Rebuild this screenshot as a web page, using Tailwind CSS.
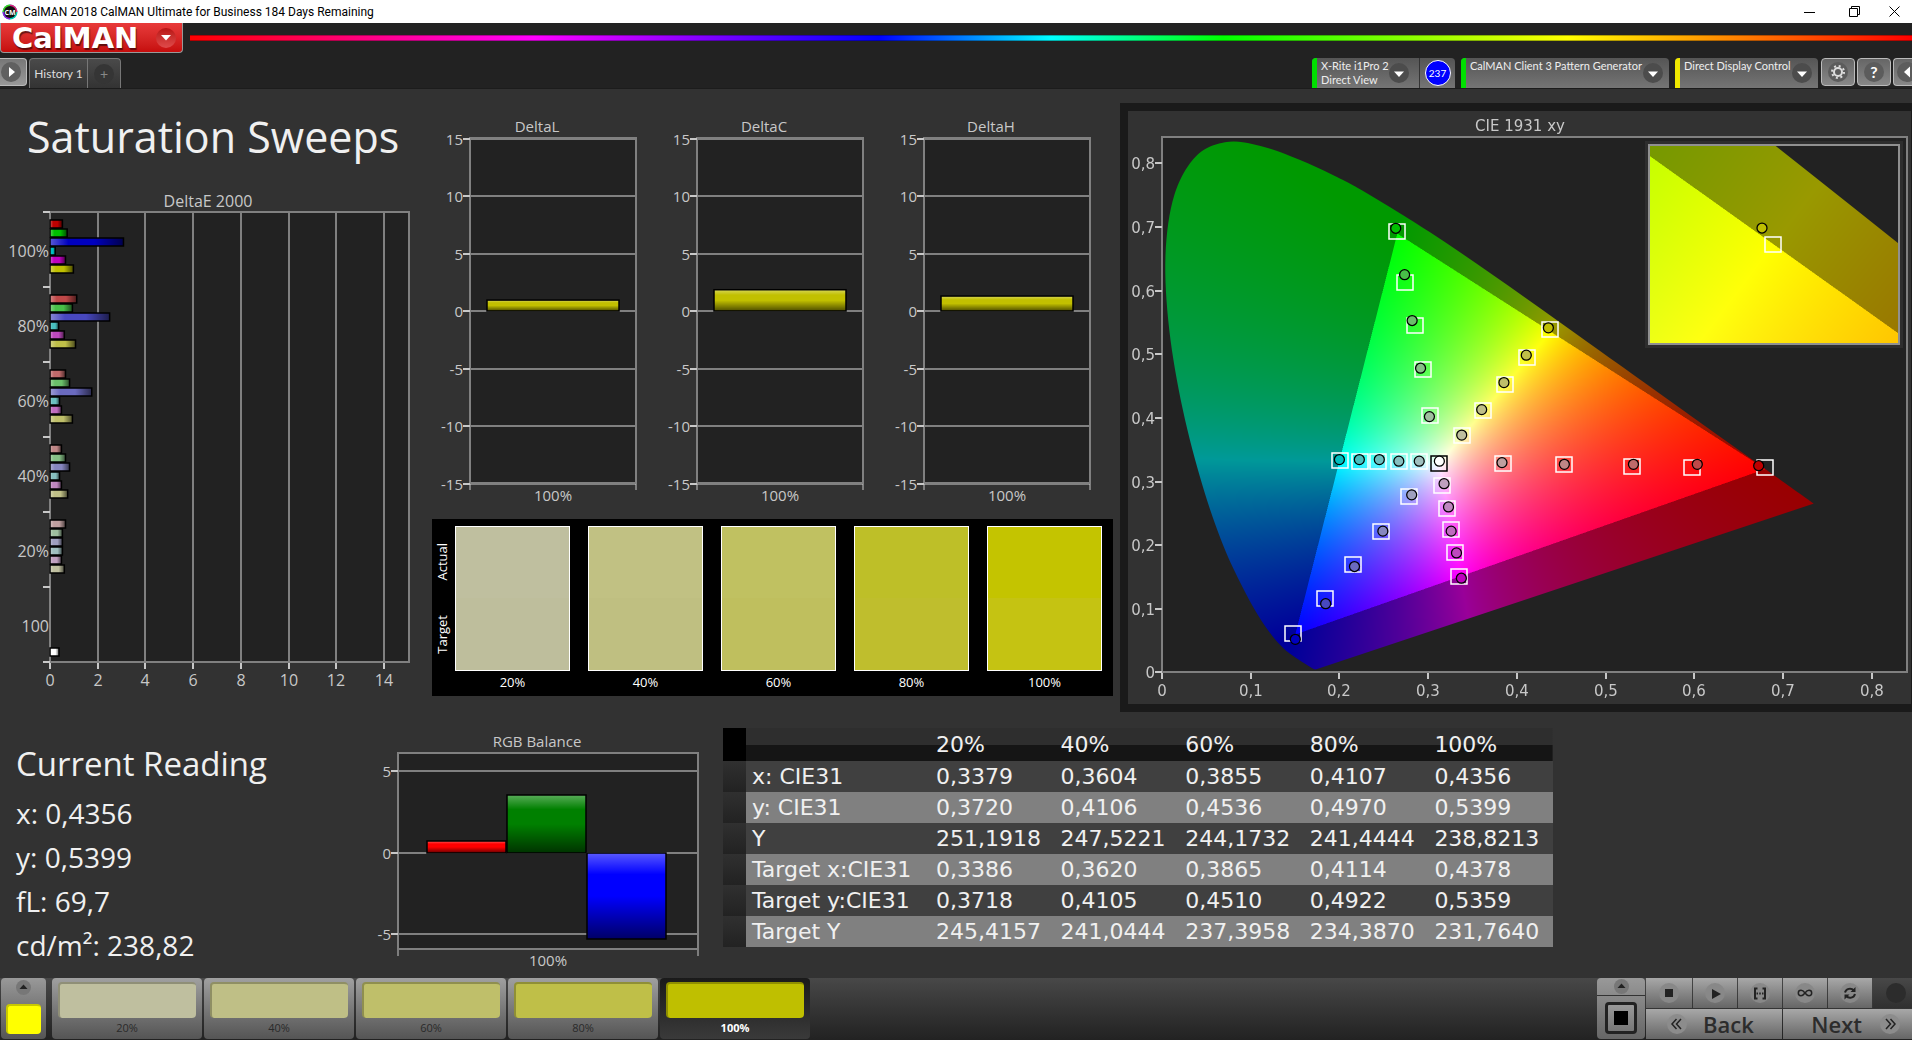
<!DOCTYPE html>
<html lang="en">
<head>
  <meta charset="UTF-8">
  <meta name="viewport" content="width=device-width, initial-scale=1.0">
  <title>CalMAN 2018 CalMAN Ultimate for Business 184 Days Remaining</title>
  <script src="https://cdn.jsdelivr.net/npm/@tailwindcss/browser@4"></script>
</head>
<body class="bg-[#323232] text-[#f0f0f0] font-['Open_Sans',sans-serif] flex flex-col min-h-screen overflow-x-hidden">

  <!-- Window title bar -->
  <div class="flex items-center h-[23px] bg-white text-black pl-[2px]">
    <svg class="w-4 h-4" viewBox="0 0 16 16">
      <circle cx="8" cy="8" r="7.5" fill="#00c8b0"/>
      <path d="M8 .5A7.5 7.5 0 0 0 .5 8H8z" fill="#40d020"/>
      <path d="M.5 8A7.5 7.5 0 0 0 8 15.500V8z" fill="#9020e0"/>
      <path d="M8 .5A7.5 7.5 0 0 1 15.500 8H8z" fill="#e02080"/>
      <circle cx="8" cy="8" r="6" fill="#111"/>
      <text x="8" y="10.500" text-anchor="middle" font-size="7" font-weight="bold" fill="#fff">CM</text>
    </svg>
    <span class="ml-[5px] text-[12px] font-[Roboto,sans-serif]">CalMAN 2018 CalMAN Ultimate for Business 184 Days Remaining</span>
    <div class="ml-auto flex items-center">
      <button aria-label="Minimize" class="w-[45px] h-[23px] flex items-center justify-center"><svg class="w-[11px] h-[11px]" viewBox="0 0 11 11" fill="none" stroke="#000"><path d="M0 6.500H11"/></svg></button>
      <button aria-label="Restore" class="w-[45px] h-[23px] flex items-center justify-center"><svg class="w-[11px] h-[11px]" viewBox="0 0 11 11" fill="none" stroke="#000"><path d="M.5 2.500h8v8h-8zM2.500 2.500v-2h8v8h-2"/></svg></button>
      <button aria-label="Close" class="w-[35px] h-[23px] flex items-center justify-center"><svg class="w-[11px] h-[11px]" viewBox="0 0 11 11" fill="none" stroke="#000"><path d="M.5 .5l10 10M10.500 .5l-10 10"/></svg></button>
    </div>
  </div>

  <!-- Logo and spectrum line -->
  <header class="bg-[#222] h-[66px] flex flex-col justify-between border-b border-[#1c1c1c]">
    <div class="flex items-start">
      <button class="w-[183px] h-[30px] flex items-center pl-[11px] pr-[6px] rounded-b bg-linear-to-b from-[#e83a3a] to-[#c60c0c] border border-t-0 border-[#999]" aria-label="CalMAN menu">
        <span class="font-['DejaVu_Sans',sans-serif] font-bold text-[29px] leading-[28px] text-white text-shadow-[1px_2px_1px_#0008]">CalMAN</span>
        <span class="ml-auto w-5 h-5 rounded-full bg-linear-to-b from-[#b81212] to-[#e04a4a] flex items-center justify-center">
          <svg class="w-[10px] h-[6px]" viewBox="0 0 10 6"><path d="M0 0H10L5 5.500z" fill="#fff"/></svg>
        </span>
      </button>
      <div class="flex-1 ml-[7px] mt-3 h-[6px] border-y border-black/30 bg-[linear-gradient(90deg,#f00_0%,#f0f_20%,#00f_40%,#0ff_50%,#0f0_60%,#ff0_80%,#f00_100%)]"></div>
    </div>

    <!-- Tabs and devices -->
    <div class="flex items-start h-[30px] text-[12px] leading-[17px] font-['Lato',sans-serif]">
      <button aria-label="Expand" class="w-[27px] h-[28px] rounded-r border border-l-0 border-[#bbb] bg-linear-to-b from-[#777] to-[#999] flex items-center justify-center pr-1">
        <svg class="w-5 h-5" viewBox="0 0 20 20"><circle cx="10" cy="10" r="10" fill="#606060"/><path d="M8 5l6 5-6 5z" fill="#fff"/></svg>
      </button>
      <button class="ml-[2px] h-[30px] w-[59px] rounded-tl border border-b-0 border-[#777] bg-linear-to-b from-[#4a4a4a] to-[#333] text-[#ddd]">History 1</button>
      <button aria-label="Add tab" class="h-[30px] w-[33px] rounded-tr border border-l-0 border-b-0 border-[#777] bg-linear-to-b from-[#4a4a4a] to-[#333] flex items-center justify-center">
        <span class="w-5 h-5 rounded-full bg-[#353535] text-[#888] text-[14px] leading-[20px]">+</span>
      </button>

      <div class="ml-auto flex items-start">
        <button class="w-[107px] h-[30px] flex bg-linear-to-b from-[#555] to-[#757575] rounded-tl overflow-hidden text-left text-[#eee] text-[11px] leading-[14px]">
          <span class="shrink-0 w-[5px] h-full bg-[#00e000]"></span>
          <span class="pl-1 pt-px whitespace-nowrap">X-Rite i1Pro 2<br>Direct View</span>
          <svg class="shrink-0 ml-auto mt-[5px] mr-[10px] w-5 h-5" viewBox="0 0 20 20"><circle cx="10" cy="10" r="10" fill="#4c4c4c"/><path d="M5 8.500H15L10 14z" fill="#fff"/></svg>
        </button>
        <div class="w-[36px] h-[30px] bg-linear-to-b from-[#555] to-[#757575] rounded-tr border-l border-[#333] flex items-center justify-center">
          <span class="w-[26px] h-[26px] rounded-full bg-[#00f] border border-white text-white text-[10px] leading-[24px] text-center">237</span>
        </div>
        <button class="ml-[6px] w-[208px] h-[30px] flex bg-linear-to-b from-[#555] to-[#757575] rounded-t overflow-hidden text-left text-[#eee] text-[11px] leading-[14px]">
          <span class="shrink-0 w-[5px] h-full bg-[#00e000]"></span>
          <span class="pl-1 pt-px whitespace-nowrap">CalMAN Client 3 Pattern Generator</span>
          <svg class="shrink-0 ml-auto mt-[5px] mr-[6px] w-5 h-5" viewBox="0 0 20 20"><circle cx="10" cy="10" r="10" fill="#4c4c4c"/><path d="M5 8.500H15L10 14z" fill="#fff"/></svg>
        </button>
        <button class="ml-[6px] w-[143px] h-[30px] flex bg-linear-to-b from-[#555] to-[#757575] rounded-t overflow-hidden text-left text-[#eee] text-[11px] leading-[14px]">
          <span class="shrink-0 w-[5px] h-full bg-[#f0e800]"></span>
          <span class="pl-1 pt-px whitespace-nowrap">Direct Display Control</span>
          <svg class="shrink-0 ml-auto mt-[5px] mr-[6px] w-5 h-5" viewBox="0 0 20 20"><circle cx="10" cy="10" r="10" fill="#4c4c4c"/><path d="M5 8.500H15L10 14z" fill="#fff"/></svg>
        </button>
        <button aria-label="Settings" class="ml-[3px] w-[34px] h-[28px] rounded border border-[#bbb] bg-linear-to-b from-[#666] to-[#888] flex items-center justify-center">
          <svg class="w-5 h-5" viewBox="0 0 20 20"><circle cx="10" cy="10" r="10" fill="#5c5c5c"/><circle cx="10" cy="10" r="4" fill="none" stroke="#ddd" stroke-width="2"/><circle cx="10" cy="10" r="6" fill="none" stroke="#ddd" stroke-width="2" stroke-dasharray="2 2.710"/></svg>
        </button>
        <button aria-label="Help" class="ml-[2px] w-[34px] h-[28px] rounded border border-[#bbb] bg-linear-to-b from-[#666] to-[#888] flex items-center justify-center">
          <span class="w-5 h-5 rounded-full bg-[#5c5c5c] text-white font-bold text-[16px] leading-[20px]">?</span>
        </button>
        <button aria-label="Collapse" class="ml-[2px] w-[19px] h-[28px] rounded-l border border-r-0 border-[#bbb] bg-linear-to-b from-[#666] to-[#888] flex items-center justify-end overflow-hidden">
          <svg class="w-[15px] h-5" viewBox="0 0 15 20"><circle cx="10" cy="10" r="10" fill="#5c5c5c"/><path d="M13 4.500l-6 5.500 6 5.500z" fill="#fff"/></svg>
        </button>
      </div>
    </div>
  </header>

  <main class="flex-1">
    <div class="grid grid-cols-[430fr_683fr_799fr] items-start">

      <section class="pt-6">
        <h1 class="pl-[27px] text-[43px] leading-[48px] whitespace-nowrap">Saturation Sweeps</h1>
        <svg id="deltaE" class="block w-full mt-6" viewBox="0 0 430 510"></svg>
      </section>

      <section class="pt-6">
        <div class="grid grid-cols-3 pr-[2px]">
          <svg id="deltaL" class="block w-full" viewBox="0 0 227 400"></svg>
          <svg id="deltaC" class="block w-full" viewBox="0 0 227 400"></svg>
          <svg id="deltaH" class="block w-full" viewBox="0 0 227 400"></svg>
        </div>
        <div class="mt-[6px] ml-[2px] bg-black h-[177px] flex pt-[7px] pr-[11px] text-[13px] leading-[22px] text-white">
          <div class="w-[23px] h-[145px] flex flex-col items-center justify-around pr-1">
            <span class="[writing-mode:vertical-rl] rotate-180">Actual</span>
            <span class="[writing-mode:vertical-rl] rotate-180">Target</span>
          </div>
          <div class="flex-1 grid grid-cols-5 gap-[18px] text-center">
            <div><div class="h-[145px] border border-white bg-[linear-gradient(#bfbf9f_50%,#bebe9c_50%)]"></div>20%</div>
            <div><div class="h-[145px] border border-white bg-[linear-gradient(#c1c183_50%,#bfbf81_50%)]"></div>40%</div>
            <div><div class="h-[145px] border border-white bg-[linear-gradient(#c0c161_50%,#bfbf5e_50%)]"></div>60%</div>
            <div><div class="h-[145px] border border-white bg-[linear-gradient(#bebf28_50%,#bfbe2d_50%)]"></div>80%</div>
            <div><div class="h-[145px] border border-white bg-[linear-gradient(#c4c400_50%,#c5c312_50%)]"></div>100%</div>
          </div>
        </div>
      </section>

      <section class="pt-[14px] pl-[7px]">
        <div class="relative border-8 border-r-[1px] border-[#1a1a1a]">
          <canvas id="gamut" class="absolute inset-0 w-full h-full" width="1566" height="1186"></canvas>
          <svg id="cie" class="relative block w-full" viewBox="0 0 783 593"></svg>
        </div>
      </section>
    </div>

    <div class="grid grid-cols-[365fr_350fr_838fr_359fr] items-start pt-4">
      <section class="pl-4 pt-[14px]">
        <h2 class="text-[33px] leading-[44px]">Current Reading</h2>
        <div class="pt-[5px] text-[28px] leading-[44px]">
          <p>x: 0,4356</p>
          <p>y: 0,5399</p>
          <p>fL: 69,7</p>
          <p>cd/m²: 238,82</p>
        </div>
      </section>

      <svg id="rgb" class="block w-full" viewBox="0 0 350 245"></svg>

      <div class="pl-2">
        <table class="w-full table-fixed text-left font-['DejaVu_Sans',sans-serif] text-[22px] leading-[31px] [&_th]:font-normal [&_td]:p-0 [&_td]:pl-[6px] [&_th]:pl-[6px] [&_th]:whitespace-nowrap">
          <colgroup><col class="w-[23px]"><col class="w-[184px]"><col><col><col><col><col></colgroup>
          <thead>
            <tr class="h-[33px] bg-[linear-gradient(#2e2e2e_50%,#151515_50%)]">
              <td class="bg-black"></td><td></td><th>20%</th><th>40%</th><th>60%</th><th>80%</th><th>100%</th>
            </tr>
          </thead>
          <tbody>
            <tr class="bg-[#404040]"><td class="bg-linear-to-b from-[#303030] to-[#222]"></td><th>x: CIE31</th><td>0,3379</td><td>0,3604</td><td>0,3855</td><td>0,4107</td><td>0,4356</td></tr>
            <tr class="bg-[#808080]"><td class="bg-linear-to-b from-[#303030] to-[#222]"></td><th>y: CIE31</th><td>0,3720</td><td>0,4106</td><td>0,4536</td><td>0,4970</td><td>0,5399</td></tr>
            <tr class="bg-[#404040]"><td class="bg-linear-to-b from-[#303030] to-[#222]"></td><th>Y</th><td>251,1918</td><td>247,5221</td><td>244,1732</td><td>241,4444</td><td>238,8213</td></tr>
            <tr class="bg-[#808080]"><td class="bg-linear-to-b from-[#303030] to-[#222]"></td><th>Target x:CIE31</th><td>0,3386</td><td>0,3620</td><td>0,3865</td><td>0,4114</td><td>0,4378</td></tr>
            <tr class="bg-[#404040]"><td class="bg-linear-to-b from-[#303030] to-[#222]"></td><th>Target y:CIE31</th><td>0,3718</td><td>0,4105</td><td>0,4510</td><td>0,4922</td><td>0,5359</td></tr>
            <tr class="bg-[#808080]"><td class="bg-linear-to-b from-[#303030] to-[#222]"></td><th>Target Y</th><td>245,4157</td><td>241,0444</td><td>237,3958</td><td>234,3870</td><td>231,7640</td></tr>
          </tbody>
        </table>
      </div>
    </div>
  </main>

  <!-- Bottom bar -->
  <footer class="h-[62px] flex bg-linear-to-b from-[#484848] to-[#222] pl-px text-[11px] leading-[20px] text-[#2a2a2a]">
    <button aria-label="Current color" class="w-[45px] h-[61px] rounded bg-linear-to-b from-[#999] to-[#555] flex flex-col items-center pt-[2px]">
      <svg class="w-[15px] h-[15px]" viewBox="0 0 15 15"><circle cx="7.500" cy="7.500" r="7.500" fill="#777"/><path d="M3.500 9L7.500 4.500 11.500 9z" fill="#222"/></svg>
      <span class="mt-[9px] w-[35px] h-[30px] rounded-sm bg-[#ff0] border-t-2 border-l-2 border-[#c8c800]"></span>
    </button>
    <div class="flex gap-[2px] ml-[6px]">
      <button class="w-[150px] h-[61px] rounded bg-linear-to-b from-[#a0a0a0] to-[#555] px-[6px] pt-[3px]"><span class="block h-[36px] rounded bg-[#bfbf9f] border-t-2 border-l-2 border-black/25"></span>20%</button>
      <button class="w-[150px] h-[61px] rounded bg-linear-to-b from-[#a0a0a0] to-[#555] px-[6px] pt-[3px]"><span class="block h-[36px] rounded bg-[#bfbf86] border-t-2 border-l-2 border-black/25"></span>40%</button>
      <button class="w-[150px] h-[61px] rounded bg-linear-to-b from-[#a0a0a0] to-[#555] px-[6px] pt-[3px]"><span class="block h-[36px] rounded bg-[#bfbf6a] border-t-2 border-l-2 border-black/25"></span>60%</button>
      <button class="w-[150px] h-[61px] rounded bg-linear-to-b from-[#a0a0a0] to-[#555] px-[6px] pt-[3px]"><span class="block h-[36px] rounded bg-[#bfbf48] border-t-2 border-l-2 border-black/25"></span>80%</button>
      <button class="w-[150px] h-[61px] rounded bg-linear-to-b from-[#1a1a1a] to-[#3a3a3a] px-[6px] pt-[3px] text-white font-bold"><span class="block h-[36px] rounded bg-[#bfbf00] border-t-2 border-l-2 border-black/25"></span>100%</button>
    </div>

    <div class="ml-auto flex gap-px">
      <button aria-label="Pattern window" class="w-[48px] h-[61px] rounded bg-linear-to-b from-[#999] to-[#666] flex flex-col items-center">
        <span class="w-full h-[18px] border-b border-[#333] flex items-center justify-center">
          <svg class="w-[15px] h-[15px]" viewBox="0 0 15 15"><circle cx="7.500" cy="7.500" r="7.500" fill="#777"/><path d="M3.500 9L7.500 4.500 11.500 9z" fill="#222"/></svg>
        </span>
        <span class="mt-[6px] w-[32px] h-[32px] rounded border-[3px] border-[#222] bg-linear-to-b from-[#999] to-[#777] flex items-center justify-center"><span class="w-[14px] h-[14px] bg-black"></span></span>
      </button>
      <div class="w-[266px] flex flex-col gap-px">
        <div class="flex gap-px h-[30px]">
          <button aria-label="Stop" class="w-[46px] bg-linear-to-b from-[#a8a8a8] to-[#666] flex items-center justify-center"><svg class="w-5 h-5" viewBox="0 0 20 20"><circle cx="10" cy="10" r="10" fill="#888"/><path d="M6 6h8v8H6z" fill="#222"/></svg></button>
          <button aria-label="Play" class="w-[44px] bg-linear-to-b from-[#a8a8a8] to-[#666] flex items-center justify-center"><svg class="w-5 h-5" viewBox="0 0 20 20"><circle cx="10" cy="10" r="10" fill="#888"/><path d="M7 6l9 5-9 5z" fill="#222"/></svg></button>
          <button aria-label="Read series" class="w-[44px] bg-linear-to-b from-[#a8a8a8] to-[#666] flex items-center justify-center"><svg class="w-5 h-5" viewBox="0 0 20 20" fill="none" stroke="#222" stroke-width="2"><circle cx="10" cy="10" r="10" fill="#888" stroke="none"/><path d="M7.500 5.500H5v10h2.500M12.500 5.500H15v10h-2.500"/><path d="M6.500 10.500h7" stroke-dasharray="1.500 1.250"/></svg></button>
          <button aria-label="Loop" class="w-[44px] bg-linear-to-b from-[#a8a8a8] to-[#666] flex items-center justify-center"><svg class="w-5 h-5" viewBox="0 0 20 20" fill="none" stroke="#222" stroke-width="1.500"><circle cx="10" cy="10" r="10" fill="#888" stroke="none"/><path d="M10 10C8.500 8 7.500 7.300 6 7.300a2.700 2.700 0 0 0 0 5.400C7.500 12.700 8.500 12 10 10c1.500-2 2.500-2.700 4-2.700a2.700 2.700 0 0 1 0 5.400c-1.500 0-2.500-.7-4-2.700z"/></svg></button>
          <button aria-label="Refresh" class="w-[44px] bg-linear-to-b from-[#a8a8a8] to-[#666] flex items-center justify-center"><svg class="w-5 h-5" viewBox="0 0 20 20" fill="none" stroke="#222" stroke-width="2"><circle cx="10" cy="10" r="10" fill="#888" stroke="none"/><path d="M5 9.500C6 5.500 11 4.500 14 7.500M15 11c-1 4-6 5-9 2"/><path d="M15.500 4v5h-5zM4.500 16.500v-5h5z" fill="#222" stroke="none"/></svg></button>
          <span class="flex-1 bg-linear-to-b from-[#484848] to-[#303030] flex items-center pl-[13px]"><span class="w-5 h-5 rounded-full bg-[#2c2c2c]"></span></span>
        </div>
        <div class="flex gap-px h-[30px] text-[22px] leading-[30px] font-semibold text-[#2c2c2c]">
          <button class="w-[136px] bg-linear-to-b from-[#a8a8a8] to-[#666] flex items-center pl-[21px] gap-4">
            <svg class="w-5 h-5" viewBox="0 0 20 20" fill="none" stroke="#222" stroke-width="1.500"><circle cx="10" cy="10" r="10" fill="#8c8c8c" stroke="none"/><path d="M9.500 5L5 10l4.500 5M14 5l-4.500 5 4.500 5"/></svg>Back
          </button>
          <button class="flex-1 bg-linear-to-b from-[#a8a8a8] to-[#666] flex items-center justify-end pr-3 gap-[18px]">
            Next<svg class="w-5 h-5" viewBox="0 0 20 20" fill="none" stroke="#222" stroke-width="1.500"><circle cx="10" cy="10" r="10" fill="#8c8c8c" stroke="none"/><path d="M6 5l4.500 5L6 15M10.500 5l4.500 5-4.500 5"/></svg>
          </button>
        </div>
      </div>
    </div>
  </footer>

  <script>
    const LABEL = 'fill-[#c8c8c8] text-[16px]';
    const SMALL = 'fill-[#c8c8c8] text-[15px]';
    const WIDE = "fill-[#c8c8c8] text-[15px] font-['DejaVu_Sans',sans-serif]";

    const rect = (x, y, w, h, attrs) => `<rect x="${x}" y="${y}" width="${w}" height="${h}" ${attrs}/>`;
    const line = (x1, y1, x2, y2, color, width = 2) => `<path d="M${x1} ${y1}L${x2} ${y2}" stroke="${color}" stroke-width="${width}"/>`;
    const text = (x, y, anchor, cls, str) => `<text x="${x}" y="${y}" text-anchor="${anchor}" class="${cls}">${str}</text>`;

    // Glossy bar: coloured box with a light start and a dark end
    const bar = (x, y, w, h, color, shade) =>
      rect(x, y, w, h, `fill="${color}"`) + rect(x, y, w, h, `fill="url(#${shade})" stroke="#000" stroke-width="1.500"`);
    const shades = `<defs>
      <linearGradient id="shadeX"><stop offset="0" stop-color="#fff" stop-opacity=".35"/><stop offset=".25" stop-color="#fff" stop-opacity="0"/><stop offset=".6" stop-opacity="0"/><stop offset="1" stop-opacity=".6"/></linearGradient>
      <linearGradient id="shadeY" x2="0" y2="1"><stop offset="0" stop-color="#fff" stop-opacity=".35"/><stop offset=".25" stop-color="#fff" stop-opacity="0"/><stop offset=".5" stop-opacity="0"/><stop offset="1" stop-opacity=".6"/></linearGradient>
    </defs>`;

    // Channel that is mixed into each hue at 100, 80, 60, 40 and 20 % saturation
    const mix = [0, 72, 106, 134, 159];
    const hues = ['100', '010', '001', '011', '101', '110'];
    const hueColor = (hue, level) => 'rgb(' + [...hues[hue]].map(c => c === '1' ? 191 : mix[level]).join() + ')';

    // DeltaE 2000
    const deltaE = [
      [.52, .72, 3.08, .22, .65, .98],
      [1.12, .94, 2.5, .36, .6, 1.07],
      [.65, .82, 1.75, .4, .48, .94],
      [.48, .65, .82, .4, .48, .74],
      [.65, .52, .52, .52, .48, .6]
    ];
    let out = shades + text(208, 22, 'middle', LABEL, 'DeltaE 2000') + rect(50, 27, 359, 450, 'fill="#222"');
    for (let v = 0; v < 15; v += 2) {
      const x = Math.round(50 + v * 23.85);
      out += line(x, 27, x, 477, '#808080') + line(x, 478, x, 484, '#c8c8c8') + text(x, 501, 'middle', LABEL, v);
    }
    out += rect(50, 27, 359, 450, 'fill="none" stroke="#808080" stroke-width="2"');
    ['100%', '80%', '60%', '40%', '20%', '100'].forEach((name, i) => {
      out += line(43, 27 + i * 75, 50, 27 + i * 75, '#c8c8c8') + text(49, 72 + i * 75, 'end', LABEL, name);
    });
    out += line(43, 477, 50, 477, '#c8c8c8');
    deltaE.forEach((row, level) => row.forEach((v, hue) => {
      out += bar(50, 35 + level * 75 + hue * 9, v * 23.85, 8, hueColor(hue, level), 'shadeX');
    }));
    out += bar(50, 463, 9, 8, '#fff', 'shadeX');
    document.getElementById('deltaE').innerHTML = out;

    // DeltaL, DeltaC and DeltaH
    [['deltaL', 'DeltaL', .95], ['deltaC', 'DeltaC', 1.85], ['deltaH', 'DeltaH', 1.3]].forEach(([id, title, value]) => {
      let out = text(107, 19, 'middle', SMALL, title) + rect(40, 25, 166, 345, 'fill="#222" stroke="#808080" stroke-width="2"');
      for (let v = -15; v <= 15; v += 5) {
        const y = Math.round(198 - v * 11.5);
        out += line(40, y, 206, y, '#808080') + line(33, y, 40, y, '#c8c8c8') + text(33, y + 6, 'end', SMALL, v);
      }
      out += line(40, 371, 40, 377, '#c8c8c8', 1) + line(206, 371, 206, 377, '#c8c8c8', 1);
      out += bar(57, 198 - value * 11.5, 132, value * 11.5, '#c2c000', 'shadeY') + text(123, 388, 'middle', SMALL, '100%');
      document.getElementById(id).innerHTML = out;
    });

    // RGB Balance
    out = text(172, 19, 'middle', SMALL, 'RGB Balance') + rect(33, 25, 300, 196, 'fill="#222" stroke="#808080" stroke-width="2"');
    [5, 0, -5].forEach(v => {
      const y = Math.round(124.500 - v * 16.35);
      out += line(33, y, 333, y, '#808080') + line(26, y, 33, y, '#c8c8c8') + text(26, y + 6, 'end', SMALL, v);
    });
    out += line(33, 222, 33, 228, '#c8c8c8', 1) + line(333, 222, 333, 228, '#c8c8c8', 1);
    out += bar(62, 113, 79, 12, '#f00', 'shadeY') + bar(142, 67, 79, 58, '#008000', 'shadeY') + bar(222, 125, 79, 86, '#00f', 'shadeY');
    out += text(183, 238, 'middle', SMALL, '100%');
    document.getElementById('rgb').innerHTML = out;

    // CIE 1931 chart: main plot and zoomed plot share one mapping shape
    const main = { x: 34, y: 26, w: 745, h: 535, toX: x => 34 + x * 887, toY: y => 561.4 - y * 636.3, fromX: px => (px - 34) / 887, fromY: py => (561.4 - py) / 636.3 };
    const zoom = { x: 521, y: 34, w: 250, h: 199, toX: x => 645 + (x - .4378) * 5000, toY: y => 133 - (y - .5359) * 4000, fromX: px => .4378 + (px - 645) / 5000, fromY: py => .5359 + (133 - py) / 4000 };
    const locus = [
      [.1741, .005], [.1714, .0051], [.1644, .0109], [.1566, .0177], [.144, .0297], [.1355, .0399], [.1241, .0578], [.1096, .0868],
      [.0913, .1327], [.0687, .2007], [.0454, .295], [.0235, .4127], [.0082, .5384], [.0039, .6548], [.0139, .7502], [.0389, .812],
      [.0743, .8338], [.1142, .8262], [.1547, .8059], [.1929, .7816], [.2296, .7543], [.3016, .6923], [.3731, .6245], [.4441, .5547],
      [.5125, .4866], [.5752, .4242], [.627, .3725], [.6658, .334], [.6915, .3083], [.719, .2809], [.7347, .2653]
    ];
    // Barycentric weights of the display primaries, scaled so that D65 is white
    const R = [.68, .32], G = [.265, .69], B = [.15, .06], W = [.3127, .329];
    const det = (G[1] - B[1]) * (R[0] - B[0]) + (B[0] - G[0]) * (R[1] - B[1]);
    const weights = (x, y) => {
      const r = ((G[1] - B[1]) * (x - B[0]) + (B[0] - G[0]) * (y - B[1])) / det;
      const g = ((B[1] - R[1]) * (x - B[0]) + (R[0] - B[0]) * (y - B[1])) / det;
      return [r, g, 1 - r - g];
    };
    const white = weights(...W);

    const canvas = document.getElementById('gamut');
    const ctx = canvas.getContext('2d');
    ctx.scale(2, 2);
    function paintGamut(p) {
      const tile = document.createElement('canvas');
      tile.width = p.w * 2;
      tile.height = p.h * 2;
      const tctx = tile.getContext('2d');
      const image = tctx.createImageData(tile.width, tile.height);
      for (let j = 0, k = 0; j < tile.height; j++) {
        for (let i = 0; i < tile.width; i++, k += 4) {
          const rgb = weights(p.fromX(p.x + i / 2), p.fromY(p.y + j / 2)).map((v, n) => v / white[n]);
          const gain = (Math.min(...rgb) < 0 ? 153 : 255) / Math.max(...rgb);
          image.data[k] = Math.max(0, rgb[0]) * gain;
          image.data[k + 1] = Math.max(0, rgb[1]) * gain;
          image.data[k + 2] = Math.max(0, rgb[2]) * gain;
          image.data[k + 3] = 255;
        }
      }
      tctx.putImageData(image, 0, 0);
      ctx.fillStyle = '#222';
      ctx.fillRect(p.x, p.y, p.w, p.h);
      ctx.save();
      ctx.beginPath();
      ctx.rect(p.x, p.y, p.w, p.h);
      ctx.clip();
      ctx.beginPath();
      const pts = locus.map(([x, y]) => [p.toX(x), p.toY(y)]);
      ctx.moveTo(...pts[0]);
      for (let i = 0; i < pts.length - 1; i++) {
        const a = pts[Math.max(i - 1, 0)], b = pts[i], c = pts[i + 1], d = pts[Math.min(i + 2, pts.length - 1)];
        ctx.bezierCurveTo(b[0] + (c[0] - a[0]) / 6, b[1] + (c[1] - a[1]) / 6, c[0] - (d[0] - b[0]) / 6, c[1] - (d[1] - b[1]) / 6, ...c);
      }
      ctx.closePath();
      ctx.clip();
      ctx.drawImage(tile, p.x, p.y, p.w, p.h);
      ctx.restore();
    }
    paintGamut(main);
    ctx.fillStyle = '#2e2e2e';
    ctx.fillRect(517, 30, 258, 207);
    paintGamut(zoom);

    // Targets (squares) and readings (circles), 100 % first
    const targets = [
      [[.68, .323], [.597, .323], [.53, .325], [.4536, .327], [.3845, .3297]],
      [[.265, .693], [.274, .6135], [.285, .5455], [.294, .4765], [.302, .404]],
      [[.148, .062], [.184, .1175], [.2157, .1706], [.247, .222], [.279, .278]],
      [[.2003, .3345], [.223, .332], [.244, .332], [.267, .332], [.29, .332]],
      [[.335, .152], [.33, .1896], [.326, .225], [.3217, .259], [.316, .295]],
      [[.4378, .5392], [.4114, .495], [.3865, .453], [.362, .413], [.3386, .373]]
    ];
    const readings = [
      [[.6727, .3248], [.6035, .327], [.5315, .327], [.4536, .327], [.3833, .3297]],
      [[.2635, .698], [.2735, .625], [.282, .553], [.2915, .478], [.3015, .402]],
      [[.1503, .052], [.1845, .108], [.217, .1664], [.249, .222], [.2815, .279]],
      [[.2, .3345], [.2225, .3345], [.245, .3345], [.267, .332], [.29, .332]],
      [[.3375, .148], [.332, .1878], [.326, .222], [.323, .26], [.318, .2966]],
      [[.4356, .5415], [.4107, .4985], [.3855, .4555], [.3604, .413], [.3379, .373]]
    ];
    const square = (px, py, color) => rect(Math.round(px) - 8, Math.round(py) - 7, 16, 15, `fill="none" stroke="${color}" stroke-width="1.500"`);
    const dot = (px, py, fill) => `<circle cx="${px}" cy="${py}" r="5" fill="${fill}" stroke="#000" stroke-width="1.250"/>`;

    out = text(392, 20, 'middle', WIDE, 'CIE 1931 xy') + rect(34, 26, 745, 535, 'fill="none" stroke="#808080" stroke-width="2"');
    for (let i = 0; i <= 8; i++) {
      const x = Math.round(main.toX(i / 10)), y = Math.round(main.toY(i / 10)), name = i ? '0,' + i : '0';
      out += line(x, 562, x, 568, '#c8c8c8') + text(x, 585, 'middle', WIDE, name);
      out += line(27, y, 34, y, '#c8c8c8') + text(27, y + 6, 'end', WIDE, name);
    }
    targets.forEach((row, hue) => row.forEach(([x, y], level) => {
      const [rx, ry] = readings[hue][level];
      out += square(main.toX(x), main.toY(y), '#fff') + dot(main.toX(rx), main.toY(ry), hueColor(hue, level));
    }));
    out += square(main.toX(.3127), main.toY(.3297), '#000') + dot(main.toX(.3127), main.toY(.332), '#fff');
    out += rect(521, 34, 250, 199, 'fill="none" stroke="#909090" stroke-width="2"');
    out += square(zoom.toX(.4378), zoom.toY(.5359), '#fff') + dot(zoom.toX(.4356), zoom.toY(.5399), '#bfbf00');
    document.getElementById('cie').innerHTML = out;
  </script>
</body>
</html>
